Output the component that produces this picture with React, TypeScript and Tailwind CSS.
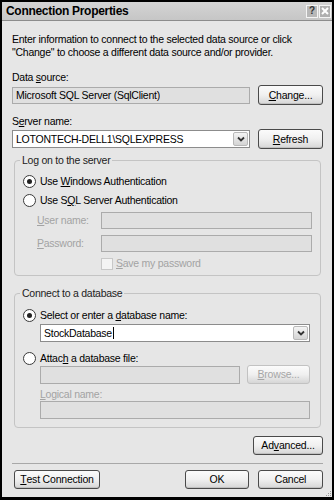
import React from "react";

function U({ children }: { children: React.ReactNode }) {
  return <span className="underline underline-offset-[1px]">{children}</span>;
}

function Button({
  children,
  className = "",
  disabled = false,
}: {
  children: React.ReactNode;
  className?: string;
  disabled?: boolean;
}) {
  return (
    <button
      type="button"
      className={`flex items-center justify-center rounded-[3px] border bg-gradient-to-b from-[#fbfbfb] via-[#f0f0f0] to-[#d6d6d6] text-[10.5px] tracking-[-0.2px] ${
        disabled
          ? "border-[#c2c2c2] text-[#a6a6a6]"
          : "border-[#4a4a4a] text-black shadow-[inset_0_-1px_0_#c0c0c0]"
      } ${className}`}
    >
      {children}
    </button>
  );
}

function TextBox({
  value = "",
  disabled = false,
  className = "",
}: {
  value?: string;
  disabled?: boolean;
  className?: string;
}) {
  return (
    <div
      className={`flex items-center border px-[3px] ${
        disabled ? "border-[#ababab] bg-[#e0e0e0]" : "border-[#8c8c8c] bg-white"
      } ${className}`}
    >
      <span className="truncate">{value}</span>
    </div>
  );
}

function Combo({ value, className = "", caret = false }: { value: string; className?: string; caret?: boolean }) {
  return (
    <div className={`flex items-stretch border border-[#8c8c8c] bg-white ${className}`}>
      <div className="flex flex-1 items-center px-[3px]">
        <span>{value}</span>
        {caret && <span className="ml-[1px] h-[12px] w-px bg-black" />}
      </div>
      <div className="m-px flex w-[15px] items-center justify-center rounded-[2px] border border-[#b8b8b8] bg-gradient-to-b from-[#f4f4f4] to-[#d4d4d4]">
        <svg width="8" height="6" viewBox="0 0 8 6">
          <path d="M1 1.5 L4 4.5 L7 1.5" fill="none" stroke="#333" strokeWidth="1.8" />
        </svg>
      </div>
    </div>
  );
}

function Radio({ checked, children }: { checked?: boolean; children: React.ReactNode }) {
  return (
    <div className="flex h-[13px] items-center gap-[4px]">
      <div className="flex h-[13px] w-[13px] items-center justify-center rounded-full border border-[#3a3a3a] bg-white">
        {checked && <div className="h-[5px] w-[5px] rounded-full bg-[#222]" />}
      </div>
      <span>{children}</span>
    </div>
  );
}

export default function App() {
  return (
    <div className="flex h-[500px] w-[334px] flex-col border-x-2 border-b-[3px] border-t-2 border-black font-['Liberation_Sans',Arial,sans-serif] text-[10.5px] leading-[13px] tracking-[-0.25px] text-black">
      {/* title bar */}
      <div className="flex h-[19px] items-center justify-between border-b border-[#8c8c8c] bg-gradient-to-b from-[#d4d4d4] to-[#c6c6c6] pl-[4px] pr-[1px]">
        <span className="text-[12px] font-bold tracking-[-0.3px]">Connection Properties</span>
        <div className="flex gap-px">
          <div className="flex h-[13px] w-[12px] items-center justify-center border border-[#f4f4f4] bg-[#b8b8b8] text-[10px] font-bold leading-none text-[#333]">
            ?
          </div>
          <div className="flex h-[13px] w-[12px] items-center justify-center border border-[#f4f4f4] bg-[#b0b0b0]">
            <svg width="8" height="8" viewBox="0 0 8 8">
              <path d="M1 1 L7 7 M7 1 L1 7" stroke="#fff" strokeWidth="2" />
            </svg>
          </div>
        </div>
      </div>

      {/* body */}
      <div className="relative flex flex-1 flex-col bg-[#e6e6e6] pl-[10px] pr-[9px]">
        <p className="mt-[12px]">
          Enter information to connect to the selected data source or click
          <br />
          "Change" to choose a different data source and/or provider.
        </p>

        <div className="mt-[12px]">
          Data <U>s</U>ource:
        </div>
        <div className="mt-px flex h-[20px] items-center justify-between">
          <TextBox disabled value="Microsoft SQL Server (SqlClient)" className="h-[17px] w-[238px]" />
          <Button className="h-[20px] w-[65px]">
            <U>C</U>hange...
          </Button>
        </div>

        <div className="mt-[10px]">
          S<U>e</U>rver name:
        </div>
        <div className="mt-[1px] flex h-[20px] items-center justify-between">
          <Combo value="LOTONTECH-DELL1\SQLEXPRESS" className="h-[18px] w-[238px]" />
          <Button className="h-[20px] w-[65px]">
            <U>R</U>efresh
          </Button>
        </div>

        <fieldset className="mx-[2px] mt-[5px] rounded-[4px] border border-[#c4c4c4] pb-[5px]">
          <legend className="ml-[5px] px-[2px] text-[#222]">Log on to the server</legend>
          <div className="ml-[8px] mt-[8px]">
            <Radio checked>
              Use <U>W</U>indows Authentication
            </Radio>
          </div>
          <div className="ml-[8px] mt-[6px]">
            <Radio>
              Use S<U>Q</U>L Server Authentication
            </Radio>
          </div>
          <div className="mt-[5px] flex h-[17px] items-center">
            <span className="w-[85px] pl-[22px] text-[#a3a3a3]">
              <U>U</U>ser name:
            </span>
            <TextBox disabled className="ml-px h-[17px] w-[211px]" />
          </div>
          <div className="mt-[6px] flex h-[17px] items-center">
            <span className="w-[85px] pl-[22px] text-[#a3a3a3]">
              <U>P</U>assword:
            </span>
            <TextBox disabled className="ml-px h-[17px] w-[211px]" />
          </div>
          <div className="ml-[86px] mt-[5px] flex h-[13px] items-center gap-[3px] text-[#a3a3a3]">
            <div className="h-[12px] w-[12px] border border-[#c8c8c8] bg-[#f4f4f4]" />
            <span>
              <U>S</U>ave my password
            </span>
          </div>
        </fieldset>

        <fieldset className="mx-[2px] mt-[11px] rounded-[4px] border border-[#c4c4c4] pb-[8px]">
          <legend className="ml-[5px] px-[2px] text-[#222]">Connect to a database</legend>
          <div className="ml-[8px] mt-[9px]">
            <Radio checked>
              Select or enter a <U>d</U>atabase name:
            </Radio>
          </div>
          <Combo value="StockDatabase" caret className="ml-[25px] mr-[10px] mt-[2px] h-[18px]" />
          <div className="ml-[8px] mt-[10px]">
            <Radio>
              Attac<U>h</U> a database file:
            </Radio>
          </div>
          <div className="ml-[25px] mr-[10px] flex h-[19px] items-center justify-between">
            <TextBox disabled className="h-[18px] w-[200px]" />
            <Button disabled className="h-[19px] w-[63px]">
              <U>B</U>rowse...
            </Button>
          </div>
          <div className="ml-[25px] mt-[4px] text-[#a3a3a3]">
            <U>L</U>ogical name:
          </div>
          <TextBox disabled className="ml-[25px] mr-[10px] h-[18px]" />
        </fieldset>

        <div className="mt-[8px] flex justify-end">
          <Button className="h-[19px] w-[70px]">
            Ad<U>v</U>anced...
          </Button>
        </div>

        <div className="mt-[8px] h-[2px] border-t border-[#a8a8a8] border-b-white" />

        <div className="mt-[5px] flex items-center">
          <Button className="ml-[2px] h-[19px] w-[86px]">
            <U>T</U>est Connection
          </Button>
          <Button className="ml-auto h-[19px] w-[64px]">OK</Button>
          <Button className="ml-[9px] h-[19px] w-[65px]">Cancel</Button>
        </div>

        {/* resize grip */}
        <div className="absolute bottom-0 right-0 grid grid-cols-3 gap-px p-px">
          <span />
          <span />
          <span className="h-px w-px bg-[#999]" />
          <span />
          <span className="h-px w-px bg-[#999]" />
          <span className="h-px w-px bg-[#999]" />
          <span className="h-px w-px bg-[#999]" />
          <span className="h-px w-px bg-[#999]" />
          <span className="h-px w-px bg-[#999]" />
        </div>
      </div>
    </div>
  );
}
